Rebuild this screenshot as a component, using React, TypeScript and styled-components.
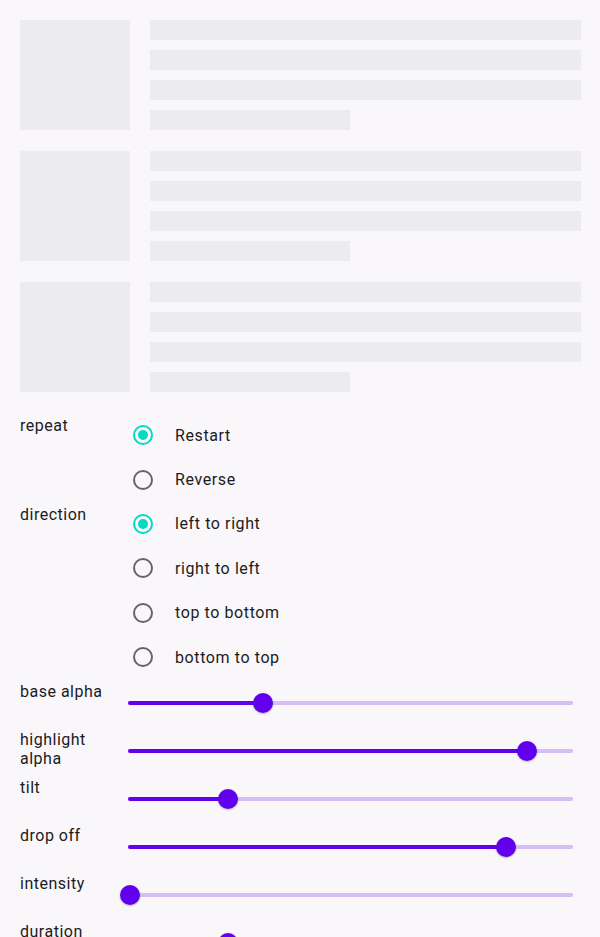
import React from "react";
import styled, { createGlobalStyle } from "styled-components";

const GlobalStyle = createGlobalStyle`
  html, body {
    margin: 0;
    padding: 0;
    overflow: hidden;
    background: #f9f7fa;
  }
  body {
    font-family: Roboto, "Noto Sans", sans-serif;
    color: #1c1b1f;
  }
`;

const skeletonRows = [0, 1, 2];

const repeatOptions = [
  { label: "Restart", selected: true },
  { label: "Reverse", selected: false },
];

const directionOptions = [
  { label: "left to right", selected: true },
  { label: "right to left", selected: false },
  { label: "top to bottom", selected: false },
  { label: "bottom to top", selected: false },
];

const sliders = [
  { label: "base alpha", value: 0.302 },
  { label: "highlight alpha", value: 0.9 },
  { label: "tilt", value: 0.222 },
  { label: "drop off", value: 0.853 },
  { label: "intensity", value: 0 },
  { label: "duration", value: 0.222 },
];

const SkeletonItem = () => (
  <SkeletonRow>
    <SkeletonImage />
    <SkeletonLines>
      <SkeletonLine />
      <SkeletonLine />
      <SkeletonLine />
      <SkeletonLine $short />
    </SkeletonLines>
  </SkeletonRow>
);

type Option = { label: string; selected: boolean };

const RadioGroup = ({ title, options }: { title: string; options: Option[] }) => (
  <SettingRow>
    <SettingLabel>{title}</SettingLabel>
    <OptionList>
      {options.map((o) => (
        <OptionRow key={o.label}>
          <RadioCircle $selected={o.selected}>{o.selected && <RadioDot />}</RadioCircle>
          <OptionText>{o.label}</OptionText>
        </OptionRow>
      ))}
    </OptionList>
  </SettingRow>
);

const Slider = ({ value }: { value: number }) => {
  const pos = `calc(2px + ${value} * (100% - 4px))`;
  return (
    <SliderBox>
      <InactiveTrack />
      <ActiveTrack style={{ width: pos }} />
      <Thumb style={{ left: pos }} />
    </SliderBox>
  );
};

export default function App() {
  return (
    <>
      <GlobalStyle />
      <Page>
        <SkeletonList>
          {skeletonRows.map((i) => (
            <SkeletonItem key={i} />
          ))}
        </SkeletonList>
        <Settings>
          <RadioGroup title="repeat" options={repeatOptions} />
          <RadioGroup title="direction" options={directionOptions} />
          {sliders.map((s) => (
            <SliderRow key={s.label}>
              <SliderLabel>{s.label}</SliderLabel>
              <Slider value={s.value} />
            </SliderRow>
          ))}
        </Settings>
      </Page>
    </>
  );
}

const Page = styled.div`
  padding: 20px 27px 20px 20px;
  display: flex;
  flex-direction: column;
  gap: 21px;
`;

const SkeletonList = styled.div`
  display: flex;
  flex-direction: column;
  gap: 21px;
  margin-right: -8px;
`;

const SkeletonRow = styled.div`
  display: flex;
  gap: 20px;
`;

const SkeletonImage = styled.div`
  width: 110px;
  height: 110px;
  background: #ecebed;
  flex-shrink: 0;
`;

const SkeletonLines = styled.div`
  flex: 1;
  display: flex;
  flex-direction: column;
  gap: 10px;
`;

const SkeletonLine = styled.div<{ $short?: boolean }>`
  height: 20px;
  width: ${(p) => (p.$short ? "200px" : "100%")};
  background: #ecebed;
`;

const Settings = styled.div`
  display: flex;
  flex-direction: column;
`;

const SettingRow = styled.div`
  display: grid;
  grid-template-columns: 108px 1fr;
`;

const SettingLabel = styled.div`
  font-size: 16px;
  line-height: 20px;
  padding-top: 3px;
  letter-spacing: 0.5px;
`;

const OptionList = styled.div`
  display: flex;
  flex-direction: column;
`;

const OptionRow = styled.div`
  height: 44.4px;
  display: flex;
  align-items: center;
  padding-left: 5px;
  gap: 22px;
`;

const RadioCircle = styled.div<{ $selected: boolean }>`
  width: 20px;
  height: 20px;
  box-sizing: border-box;
  border-radius: 50%;
  border: 2px solid ${(p) => (p.$selected ? "#03dac5" : "#666468")};
  display: flex;
  align-items: center;
  justify-content: center;
`;

const RadioDot = styled.div`
  width: 10px;
  height: 10px;
  border-radius: 50%;
  background: #03dac5;
`;

const OptionText = styled.span`
  font-size: 16px;
  letter-spacing: 0.6px;
`;

const SliderRow = styled.div`
  display: grid;
  grid-template-columns: 108px 1fr;
  height: 48px;
`;

const SliderLabel = styled.div`
  font-size: 16px;
  line-height: 19px;
  padding-top: 3px;
  letter-spacing: 0.5px;
`;

const SliderBox = styled.div`
  position: relative;
  height: 48px;
`;

const InactiveTrack = styled.div`
  position: absolute;
  left: 0;
  right: 0;
  top: 22px;
  height: 4px;
  border-radius: 2px;
  background: #d5bdf8;
`;

const ActiveTrack = styled.div`
  position: absolute;
  left: 0;
  top: 22px;
  height: 4px;
  border-radius: 2px;
  background: #6200ee;
`;

const Thumb = styled.div`
  position: absolute;
  top: 14px;
  width: 20px;
  height: 20px;
  margin-left: -10px;
  border-radius: 50%;
  background: #6200ee;
  box-shadow: 0 1px 2px rgba(0, 0, 0, 0.25);
`;
